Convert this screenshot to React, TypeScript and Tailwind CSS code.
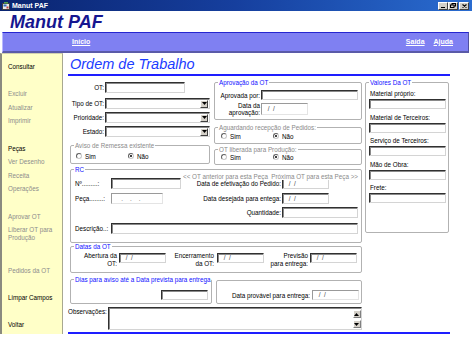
import React from "react";

type P = { className?: string; children?: React.ReactNode };

const Inp = ({ className = "", children, dim }: P & { dim?: boolean }) => (
  <div
    className={`bg-white border text-[6.3px] leading-[8px] pl-[4px] text-[#404040] whitespace-pre ${
      dim
        ? "border-t-[#9a9a9a] border-l-[#9a9a9a] border-b-[#e4e4e4] border-r-[#e4e4e4]"
        : "border-t-[#303030] border-l-[#303030] border-b-[#d4d4d4] border-r-[#d4d4d4] shadow-[inset_1px_1px_0_#8a8a8a]"
    } ${className}`}
  >
    {children}
  </div>
);

const Sel = ({ className = "" }: P) => (
  <div
    className={`h-[11px] bg-white border border-t-[#303030] border-l-[#303030] border-b-[#d4d4d4] border-r-[#d4d4d4] shadow-[inset_1px_1px_0_#8a8a8a] flex justify-end items-center pr-[1px] ${className}`}
  >
    <div className="w-[8px] h-[8px] bg-[#d4d0c8] border border-t-white border-l-white border-b-[#404040] border-r-[#404040] flex items-center justify-center">
      <svg width="5" height="3" viewBox="0 0 5 3">
        <path d="M0 0h5L2.5 3z" fill="black" />
      </svg>
    </div>
  </div>
);

const Radio = ({ on }: { on?: boolean }) => (
  <span className="inline-flex w-[6px] h-[6px] rounded-full border border-t-[#606060] border-l-[#606060] border-b-[#c8c8c8] border-r-[#c8c8c8] bg-white items-center justify-center">
    {on && <span className="w-[2px] h-[2px] rounded-full bg-black" />}
  </span>
);

const Group = ({
  title,
  blue,
  className = "",
  children,
}: P & { title?: string; blue?: boolean }) => (
  <fieldset className={`border border-[#b2b2b2] rounded-[2px] min-w-0 ${className}`}>
    {title && (
      <legend
        className={`ml-[3px] px-[1px] text-[6.3px] leading-[7px] whitespace-nowrap ${
          blue ? "text-[#1010ff]" : "text-[#8a8a8a]"
        }`}
      >
        {title}
      </legend>
    )}
    {children}
  </fieldset>
);

const SideItem = ({ children, on }: P & { on?: boolean }) => (
  <div className={`h-[13.6px] leading-[13.6px] ${on ? "text-black" : "text-[#8c8c8c]"}`}>{children}</div>
);

const Blank = () => <div className="h-[13.6px]" />;

export default function App() {
  return (
    <div className="w-[472px] h-[354px] bg-white overflow-hidden font-['Liberation_Sans',Arial,sans-serif] text-black">
      {/* title bar */}
      <div className="h-[11px] bg-gradient-to-r from-[#0a2470] via-[#163f9e] to-[#2a6cd0] flex items-center pl-[2px] pr-[3px]">
        <svg width="8" height="8" viewBox="0 0 8 8">
          <rect x="0.5" y="1.5" width="7" height="6" fill="#e8e8e8" stroke="#404040" strokeWidth="1" />
          <rect x="1.5" y="2.5" width="3" height="2" fill="#3070c0" />
          <rect x="4.5" y="4.5" width="2" height="2" fill="#c04040" />
          <rect x="2" y="0" width="4" height="1.5" fill="#50a050" />
        </svg>
        <span className="ml-[2px] text-white font-bold text-[7px] leading-none">Manut PAF</span>
        <div className="ml-auto flex">
          <div className="w-[10px] h-[8px] bg-[#d4d0c8] border border-t-white border-l-white border-b-[#404040] border-r-[#404040] flex items-end justify-center pb-[1px]">
            <div className="w-[4px] h-[1px] bg-black" />
          </div>
          <div className="w-[10px] h-[8px] bg-[#d4d0c8] border border-t-white border-l-white border-b-[#404040] border-r-[#404040] flex items-center justify-center">
            <svg width="6" height="5" viewBox="0 0 6 5">
              <rect x="2" y="0.5" width="3.5" height="2.5" fill="none" stroke="black" strokeWidth="1" />
              <rect x="0.5" y="2" width="3.5" height="2.5" fill="#d4d0c8" stroke="black" strokeWidth="1" />
            </svg>
          </div>
          <div className="ml-[1px] w-[10px] h-[8px] bg-[#d4d0c8] border border-t-white border-l-white border-b-[#404040] border-r-[#404040] flex items-center justify-center">
            <svg width="5" height="4" viewBox="0 0 5 4">
              <path d="M0.5 0.5L4.5 3.5M4.5 0.5L0.5 3.5" stroke="black" strokeWidth="1.2" />
            </svg>
          </div>
        </div>
      </div>

      {/* header */}
      <div className="h-[21px] pl-[10px] flex items-center">
        <span className="text-[18px] font-bold italic text-[#161690] leading-none">Manut PAF</span>
      </div>

      {/* nav bar */}
      <div className="h-[21px] ml-[2px] mr-[3px] bg-[#7f80f2] border-t border-t-[#2626d0] border-b-2 border-b-[#5a5aa8] border-r border-r-[#5050a0] border-l border-l-[#b8b8ff] flex items-center text-white font-bold underline text-[7px]">
        <span className="ml-[69px]">Início</span>
        <span className="ml-auto">Saída</span>
        <span className="ml-[9px] mr-[15px]">Ajuda</span>
      </div>

      {/* body */}
      <div className="flex">
        {/* sidebar */}
        <div className="w-[63px] h-[281px] shrink-0 bg-[#ffffc8] border-l-2 border-l-[#8a8a80] border-r border-r-[#a8a890] border-t border-t-[#d0d0b0] pl-[6px] pt-[6px] text-[6.3px]">
          <SideItem on>Consultar</SideItem>
          <Blank />
          <SideItem>Excluir</SideItem>
          <SideItem>Atualizar</SideItem>
          <SideItem>Imprimir</SideItem>
          <Blank />
          <SideItem on>Peças</SideItem>
          <SideItem>Ver Desenho</SideItem>
          <SideItem>Receita</SideItem>
          <SideItem>Operações</SideItem>
          <Blank />
          <SideItem>Aprovar OT</SideItem>
          <div className="h-[27.2px] pt-[2.8px] leading-[8px] text-[#8c8c8c]">
            Liberar OT para
            <br />
            Produção
          </div>
          <Blank />
          <SideItem>Pedidos da OT</SideItem>
          <Blank />
          <SideItem on>Limpar Campos</SideItem>
          <Blank />
          <SideItem on>Voltar</SideItem>
        </div>

        {/* main */}
        <div className="pl-[5px] text-[6.3px] leading-[7px]">
          <div className="pl-[2px] pt-[3px] h-[20px] text-[14.5px] leading-[17px] italic text-[#1a3cff]">
            Ordem de Trabalho
          </div>
          <div className="mt-[1px] h-[2px] w-[382px] bg-[#1e1eff]" />

          <div className="flex gap-[3px]">
            {/* left block */}
            <div className="ml-[2px] w-[292px] flex flex-col">
              <div className="flex gap-[4px]">
                {/* col A */}
                <div className="w-[140px] pt-[6px]">
                  <div className="flex items-center">
                    <span className="w-[35px] text-right pr-[1px]">OT:</span>
                    <Inp className="w-[80px] h-[11px]" />
                  </div>
                  <div className="mt-[5px] flex items-center">
                    <span className="w-[35px] text-right pr-[1px]">Tipo de OT:</span>
                    <Sel className="w-[105px]" />
                  </div>
                  <div className="mt-[3px] flex items-center">
                    <span className="w-[35px] text-right pr-[1px]">Prioridade:</span>
                    <Sel className="w-[105px]" />
                  </div>
                  <div className="mt-[3px] flex items-center">
                    <span className="w-[35px] text-right pr-[1px]">Estado:</span>
                    <Sel className="w-[105px]" />
                  </div>
                  <Group title="Aviso de Remessa existente" className="mt-[5px]">
                    <div className="pt-[3.5px] pb-[3px] flex items-center h-[13.5px]">
                      <div className="ml-[5px] w-[52px] flex items-center gap-[3px]">
                        <Radio />
                        <span>Sim</span>
                      </div>
                      <div className="flex items-center gap-[3px]">
                        <Radio on />
                        <span>Não</span>
                      </div>
                    </div>
                  </Group>
                </div>

                {/* col B */}
                <div className="w-[148px] pt-[3px]">
                  <Group title="Aprovação da OT" blue>
                    <div className="pt-[4px] flex items-center">
                      <span className="w-[46px] text-right pr-[1px]">Aprovada por:</span>
                      <Inp className="w-[97px] h-[10px]" />
                    </div>
                    <div className="mt-[2px] flex items-start h-[14px] pb-0">
                      <span className="w-[46px] text-right pr-[1px] leading-[7px]">
                        Data da
                        <br />
                        aprovação:
                      </span>
                      <Inp dim className="w-[47px] h-[12px] mt-[1px] leading-[10px]">
                        {" /  /"}
                      </Inp>
                    </div>
                    <div className="h-[3px]" />
                  </Group>
                  <Group title="Aguardando recepção de Pedidos:" className="mt-[4px]">
                    <div className="pt-[1.5px] pb-[3px] flex items-center h-[11.5px]">
                      <div className="ml-[6px] w-[52px] flex items-center gap-[3px]">
                        <Radio />
                        <span>Sim</span>
                      </div>
                      <div className="flex items-center gap-[3px]">
                        <Radio on />
                        <span>Não</span>
                      </div>
                    </div>
                  </Group>
                  <Group title="OT liberada para Produção:" className="mt-[2.5px]">
                    <div className="pt-[0.5px] pb-[3px] flex items-center h-[10.5px]">
                      <div className="ml-[6px] w-[52px] flex items-center gap-[3px]">
                        <Radio />
                        <span>Sim</span>
                      </div>
                      <div className="flex items-center gap-[3px]">
                        <Radio on />
                        <span>Não</span>
                      </div>
                    </div>
                  </Group>
                </div>
              </div>

              {/* RC */}
              <Group title="RC" blue className="mt-[1.5px] relative">
                <span className="absolute top-0 left-[111px] bg-white px-[1px] text-[#8a8a8a] whitespace-nowrap">
                  {"<< OT anterior para esta Peça"}
                </span>
                <span className="absolute top-0 right-[2px] bg-white px-[1px] text-[#8a8a8a] whitespace-nowrap">
                  {"Próxima OT para esta Peça >>"}
                </span>
                <div className="pt-[5px] flex items-center">
                  <span className="w-[40px] pl-[4px]">Nº.........:</span>
                  <Inp className="w-[70px] h-[11px]" />
                  <span className="ml-auto text-right pr-[1px]">Data de efetivação do Pedido:</span>
                  <Inp className="w-[47px] h-[11px] leading-[9px] mr-[32px]">{" /  /"}</Inp>
                </div>
                <div className="mt-[4px] flex items-center">
                  <span className="w-[40px] pl-[4px]">Peça........:</span>
                  <Inp dim className="w-[52px] h-[11px] leading-[9px] text-[#707070]">{"   .    .    ."}</Inp>
                  <span className="ml-auto text-right pr-[1px]">Data desejada para entega:</span>
                  <Inp className="w-[47px] h-[11px] leading-[9px] mr-[32px]">{" /  /"}</Inp>
                </div>
                <div className="mt-[3px] flex items-center">
                  <span className="ml-auto text-right pr-[1px]">Quantidade:</span>
                  <Inp className="w-[76px] h-[11px] mr-[3px]" />
                </div>
                <div className="mt-[5px] flex items-center">
                  <span className="w-[40px] pl-[4px]">Descrição..:</span>
                  <Inp className="w-[247px] h-[11px]" />
                </div>
                <div className="h-[8px]" />
              </Group>

              {/* Datas da OT */}
              <Group title="Datas da OT" blue>
                <div className="pt-[2px] pb-[4px] flex items-start leading-[8px]">
                  <span className="w-[46px] text-right">
                    Abertura da
                    <br />
                    OT:
                  </span>
                  <Inp className="ml-[2px] w-[47px] h-[10px] mt-[1px]">{" /  /"}</Inp>
                  <span className="w-[48px] text-right">
                    Encerramento
                    <br />
                    da OT:
                  </span>
                  <Inp className="ml-[3px] w-[47px] h-[10px] mt-[1px]">{" /  /"}</Inp>
                  <span className="w-[44px] text-right">
                    Previsão
                    <br />
                    para entrega:
                  </span>
                  <Inp className="ml-[2px] w-[47px] h-[10px] mt-[1px]">{" /  /"}</Inp>
                </div>
              </Group>

              {/* Dias row */}
              <div className="mt-[3px] flex gap-[4px] items-start">
                <Group title="Dias para aviso até a Data prevista para entrega" blue className="w-[142px]">
                  <div className="pt-[7px] pb-[3px] flex">
                    <Inp className="ml-auto mr-[3px] w-[47px] h-[10px]" />
                  </div>
                </Group>
                <div className="mt-[4px] w-[146px] border border-[#b2b2b2] rounded-[2px] pt-[9px] pb-[3px] flex items-center">
                  <span className="flex-1 text-right pr-[2px]">Data provável para entrega:</span>
                  <Inp dim className="w-[47px] h-[10px] mr-[2px]">{" /  /"}</Inp>
                </div>
              </div>

              {/* Observações */}
              <div className="mt-[3px] -ml-[2px] flex">
                <span className="w-[40px] pt-[1px]">Observações:</span>
                <div className="w-[254px] h-[23px] bg-white border border-t-[#303030] border-l-[#303030] border-b-[#d4d4d4] border-r-[#d4d4d4] shadow-[inset_1px_1px_0_#8a8a8a] flex justify-end">
                  <div className="w-[9px] flex flex-col items-center pt-[2px] gap-[2px]">
                    <div className="w-[8px] h-[8px] bg-[#d4d0c8] border border-t-white border-l-white border-b-[#808080] border-r-[#808080] flex items-center justify-center">
                      <svg width="5" height="3" viewBox="0 0 5 3">
                        <path d="M0 3h5L2.5 0z" fill="black" />
                      </svg>
                    </div>
                    <div className="w-[8px] h-[8px] bg-[#d4d0c8] border border-t-white border-l-white border-b-[#808080] border-r-[#808080] flex items-center justify-center">
                      <svg width="5" height="3" viewBox="0 0 5 3">
                        <path d="M0 0h5L2.5 3z" fill="black" />
                      </svg>
                    </div>
                  </div>
                </div>
              </div>
              <div className="mt-[2px] -ml-[2px] h-[2px] w-[382px] bg-[#1e1eff]" />
            </div>

            {/* Valores */}
            <Group title="Valores Da OT" blue className="w-[84px] h-[154px] mt-[3px] self-start">
              <div className="pt-[4px] pl-[4px]">
                {["Material próprio:", "Material de Terceiros:", "Serviço de Terceiros:", "Mão de Obra:", "Frete:"].map(
                  (l) => (
                    <div key={l} className="mb-[4.5px]">
                      <div className="leading-[7px]">{l}</div>
                      <Inp className="mt-[2px] -ml-[1px] w-[77px] h-[10px]" />
                    </div>
                  )
                )}
              </div>
            </Group>
          </div>
        </div>
      </div>
    </div>
  );
}
